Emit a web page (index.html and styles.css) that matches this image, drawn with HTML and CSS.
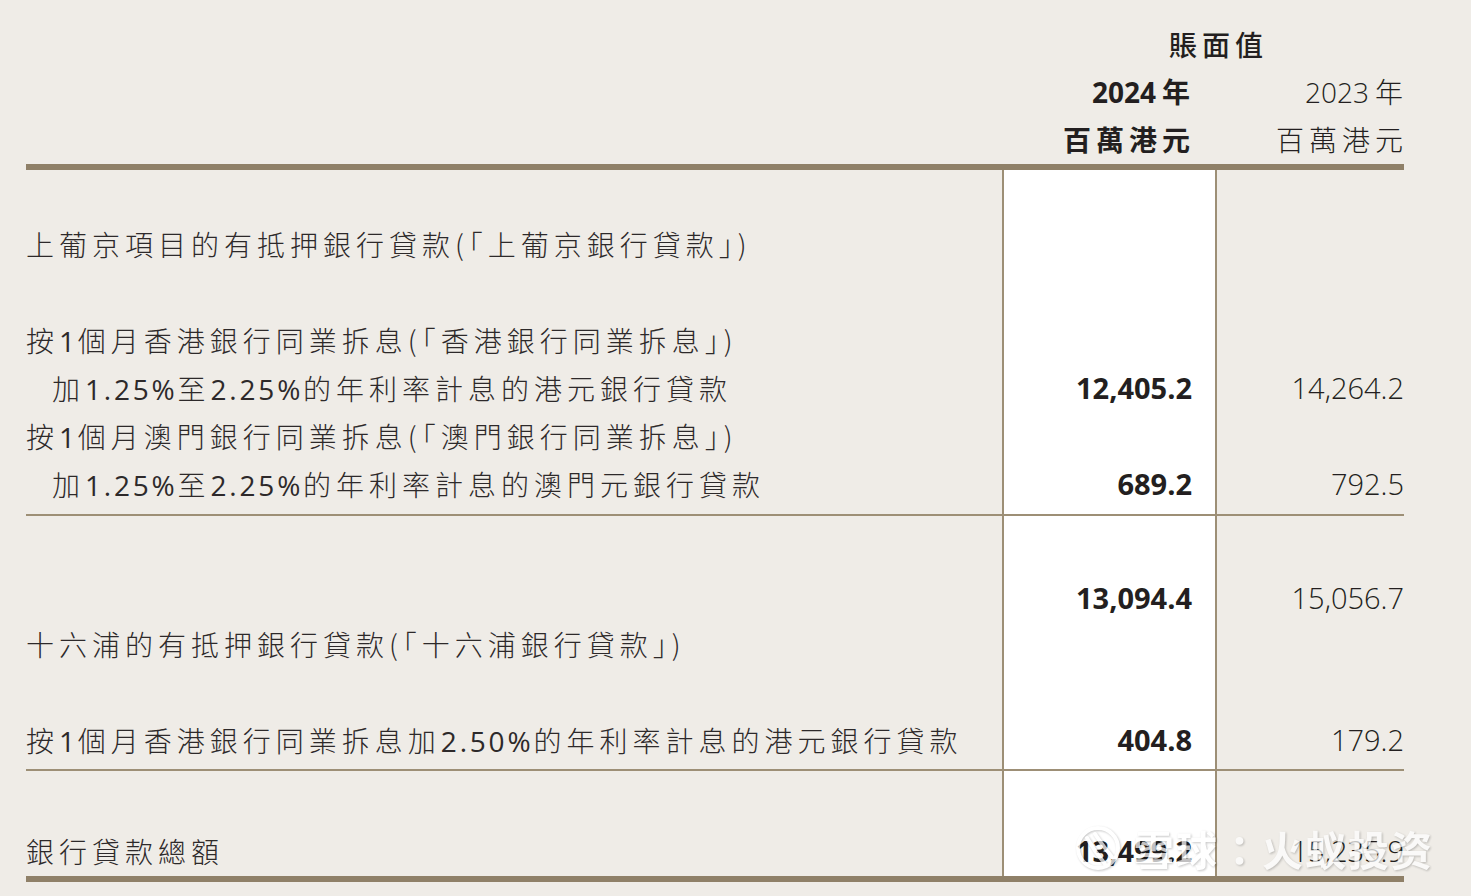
FILE: index.html
```html
<!DOCTYPE html>
<html lang="zh-Hant">
<head>
<meta charset="utf-8">
<title>銀行貸款</title>
<link rel="stylesheet" href="styles.css">
</head>
<body>
<div class="page">
  <table class="loans">
    <colgroup>
      <col class="c-label">
      <col class="c-cur">
      <col class="c-prev">
    </colgroup>
    <thead>
      <tr class="h-title">
        <th></th>
        <th colspan="2" class="title">賬面值</th>
      </tr>
      <tr class="h-year">
        <th></th>
        <th class="cur"><span class="hx"><span class="n">2024</span>年</span></th>
        <th class="prev"><span class="hx"><span class="n">2023</span>年</span></th>
      </tr>
      <tr class="h-unit">
        <th></th>
        <th class="cur"><span class="hx">百萬港元</span></th>
        <th class="prev"><span class="hx">百萬港元</span></th>
      </tr>
    </thead>
    <tbody class="sec sec1">
      <tr class="first">
        <td class="label">上葡京項目的有抵押銀行貸款(「上葡京銀行貸款」)</td>
        <td class="cur"></td>
        <td class="prev"></td>
      </tr>
      <tr>
        <td class="label"></td>
        <td class="cur"></td>
        <td class="prev"></td>
      </tr>
      <tr>
        <td class="label">按<span class="n">1</span>個月香港銀行同業拆息(「香港銀行同業拆息」)</td>
        <td class="cur"></td>
        <td class="prev"></td>
      </tr>
      <tr>
        <td class="label indent">加<span class="n">1.25%</span>至<span class="n">2.25%</span>的年利率計息的港元銀行貸款</td>
        <td class="cur num">12,405.2</td>
        <td class="prev num">14,264.2</td>
      </tr>
      <tr>
        <td class="label">按<span class="n">1</span>個月澳門銀行同業拆息(「澳門銀行同業拆息」)</td>
        <td class="cur"></td>
        <td class="prev"></td>
      </tr>
      <tr class="last">
        <td class="label indent">加<span class="n">1.25%</span>至<span class="n">2.25%</span>的年利率計息的澳門元銀行貸款</td>
        <td class="cur num">689.2</td>
        <td class="prev num">792.5</td>
      </tr>
    </tbody>
    <tbody class="sec sec2">
      <tr class="first">
        <td class="label"></td>
        <td class="cur num">13,094.4</td>
        <td class="prev num">15,056.7</td>
      </tr>
      <tr>
        <td class="label">十六浦的有抵押銀行貸款(「十六浦銀行貸款」)</td>
        <td class="cur"></td>
        <td class="prev"></td>
      </tr>
      <tr>
        <td class="label"></td>
        <td class="cur"></td>
        <td class="prev"></td>
      </tr>
      <tr class="last">
        <td class="label">按<span class="n">1</span>個月香港銀行同業拆息加<span class="n">2.50%</span>的年利率計息的港元銀行貸款</td>
        <td class="cur num">404.8</td>
        <td class="prev num">179.2</td>
      </tr>
    </tbody>
    <tbody class="sec sec3">
      <tr class="first last">
        <td class="label">銀行貸款總額</td>
        <td class="cur num">13,499.2</td>
        <td class="prev num">15,235.9</td>
      </tr>
    </tbody>
  </table>

  <div class="watermark">
    <svg class="wm-logo" width="46" height="48" viewBox="0 0 46 48" aria-hidden="true">
      <circle cx="23" cy="24" r="20" fill="none" stroke="#ffffff" stroke-width="4"/>
      <path d="M12 14 Q20 28 30 40" stroke="#ffffff" stroke-width="4" fill="none" stroke-linecap="round"/>
      <path d="M20 10 Q28 22 37 33" stroke="#ffffff" stroke-width="4" fill="none" stroke-linecap="round"/>
    </svg>
    <span class="wm-text">雪球：火蚁投资</span>
  </div>
</div>
</body>
</html>
```

FILE: styles.css
```css
html, body {
  margin: 0;
  padding: 0;
}

body {
  background: #efece7;
  color: #231f20;
  font-family: "Open Sans", "Noto Sans CJK TC", sans-serif;
}

.page {
  position: relative;
  width: 1471px;
  height: 896px;
  padding: 20px 0 0 26px;
  box-sizing: border-box;
}

.loans {
  border-collapse: collapse;
  table-layout: fixed;
  width: 1378px;
}

.c-label { width: 977px; }
.c-cur { width: 213px; }
.c-prev { width: 188px; }

th, td {
  padding: 0;
  height: 48px;
  line-height: 48px;
  font-size: 28px;
  white-space: nowrap;
  vertical-align: middle;
}

/* header */
thead th {
  font-family: "Open Sans", "Noto Sans CJK TC", sans-serif;
  letter-spacing: 5px;
}

.hx {
  margin-right: -5px;
}

.title {
  text-align: right;
  padding-right: 136px;
  font-weight: 500;
  font-family: "Noto Sans CJK TC", sans-serif;
}

thead .cur {
  text-align: right;
  padding-right: 26px;
  font-weight: 700;
}

thead .prev {
  text-align: right;
  padding-right: 1px;
  font-weight: 300;
}

.h-unit th {
  border-bottom: 6px solid #8f8068;
}

.n {
  letter-spacing: 0;
  line-height: 1;
  font-family: "Open Sans", sans-serif;
}

.h-year .n { margin-right: 6px; }

/* body */
.label {
  font-family: "Noto Sans CJK TC", sans-serif;
  font-weight: 300;
  letter-spacing: 5px;
  font-feature-settings: "halt";
  color: #2d292a;
}

.label .n {
  font-family: "Open Sans", sans-serif;
  font-weight: 400;
  letter-spacing: 2.8px;
}

.label.indent {
  padding-left: 26px;
}

tbody .cur {
  background: #ffffff;
  border-left: 2px solid #9d8f76;
  border-right: 2px solid #9d8f76;
}

.num {
  font-family: "Open Sans", sans-serif;
  font-size: 29px;
  text-align: right;
}

td.cur.num {
  font-weight: 700;
  padding-right: 23px;
}

td.prev.num {
  font-weight: 300;
  padding-right: 0;
  color: #231f20;
}

.sec1 .first td { padding-top: 50px; }
.sec1 .last td { padding-bottom: 6px; border-bottom: 2px solid #9d8f76; }

.sec2 .first td { padding-top: 60px; line-height: 44px; height: 44px; }
.sec2 .last td { padding-bottom: 5px; border-bottom: 2px solid #9d8f76; }

.sec3 .first td { padding-top: 56px; }
.sec3 .last td { padding-bottom: 1px; border-bottom: 6px solid #8f8068; }

/* watermark overlay */
.watermark {
  position: absolute;
  left: 1075px;
  top: 824px;
  display: flex;
  align-items: center;
  gap: 12px;
  opacity: 0.72;
  filter: drop-shadow(1px 1px 1px rgba(0, 0, 0, 0.3));
}

.wm-text {
  font-family: "Noto Sans CJK SC", sans-serif;
  font-weight: 700;
  font-size: 41px;
  line-height: 48px;
  color: #ffffff;
  letter-spacing: 2px;
}
```
